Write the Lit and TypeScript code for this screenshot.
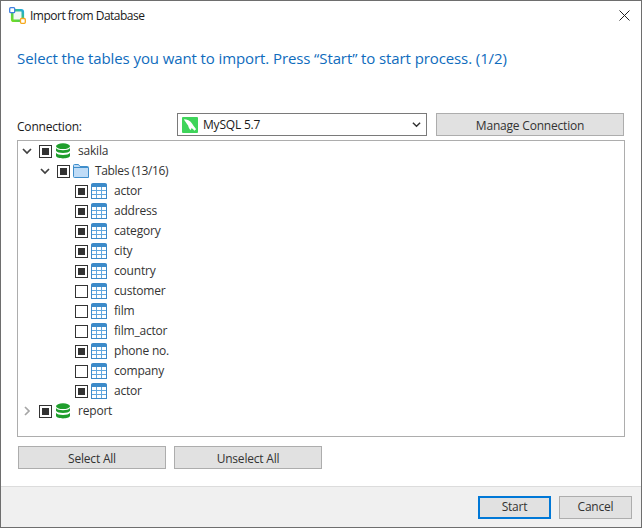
import { LitElement, html, css, svg } from "lit";
import { customElement } from "lit/decorators.js";

const chevDown = html`<svg class="chev" viewBox="0 0 10 10"><path d="M1 3 L5 7 L9 3" fill="none" stroke="#404040" stroke-width="1.7"/></svg>`;
const chevRight = html`<svg class="chev" viewBox="0 0 10 10"><path d="M3 1 L7 5 L3 9" fill="none" stroke="#a6a6a6" stroke-width="1.7"/></svg>`;
const dbIcon = html`<svg class="ico" viewBox="0 0 16 16">
  <ellipse cx="8" cy="3.2" rx="7" ry="2.9" fill="#1f9e2c"/>
  <path d="M1 5 C2.5 8 13.5 8 15 5 V7.8 C13.5 10.8 2.5 10.8 1 7.8Z" fill="#1f9e2c"/>
  <path d="M1 9.8 C2.5 12.8 13.5 12.8 15 9.8 V13 C14 16.2 2 16.2 1 13Z" fill="#1f9e2c"/>
</svg>`;
const folderIcon = html`<svg class="ico" viewBox="0 0 16 16">
  <path d="M0.5 13.5 V2.5 Q0.5 1.5 1.5 1.5 H5.5 L7 3.5 H14.5 Q15.5 3.5 15.5 4.5 V14.5 H1.5 Q0.5 14.5 0.5 13.5Z" fill="#bfdcf7" stroke="#3f8ecb"/>
  <path d="M1 4.5 H15" stroke="#3f8ecb"/>
</svg>`;
const tableIcon = html`<svg class="ico" viewBox="0 0 16 16">
  <path d="M0 2 Q0 0 2 0 H14 Q16 0 16 2 V4 H0Z" fill="#3d8bc9"/>
  <rect x="0.5" y="2" width="15" height="13.5" fill="none" stroke="#3d8bc9"/>
  <path d="M5.5 4 V15 M10.5 4 V15 M1 7.5 H15 M1 11.5 H15" stroke="#62a8de" stroke-width="1"/>
</svg>`;

const appLogo = svg`
  <defs>
    <linearGradient id="g" x1="0" y1="1" x2="1" y2="0">
      <stop offset="0" stop-color="#74dc24"/>
      <stop offset="0.55" stop-color="#3cc86a"/>
      <stop offset="1" stop-color="#22a8dc"/>
    </linearGradient>
  </defs>
  <rect x="3.2" y="3.2" width="10.6" height="10.6" rx="1.6" fill="#f4f8f4" stroke="url(#g)" stroke-width="2.6"/>
  <rect x="0.7" y="0.7" width="5" height="5" rx="1" fill="#fff" stroke="#3f7fe0" stroke-width="1.3"/>
  <rect x="11.5" y="11.5" width="4.8" height="4.8" rx="1" fill="#fff" stroke="#f5a81c" stroke-width="1.3"/>
`;

type Row = { label: string; checked: boolean };
const tables: Row[] = [
  { label: "actor", checked: true },
  { label: "address", checked: true },
  { label: "category", checked: true },
  { label: "city", checked: true },
  { label: "country", checked: true },
  { label: "customer", checked: false },
  { label: "film", checked: false },
  { label: "film_actor", checked: false },
  { label: "phone no.", checked: true },
  { label: "company", checked: false },
  { label: "actor", checked: true },
];

@customElement("app-root")
export class AppRoot extends LitElement {
  static styles = css`
    :host {
      display: block;
      width: 642px;
      height: 528px;
      font-family: "Open Sans", "Noto Sans", sans-serif;
      font-size: 12px;
      color: #333;
    }
    * { box-sizing: border-box; }
    .win {
      width: 642px;
      height: 528px;
      background: #fff;
      border: 1px solid #6e6e6e;
      display: flex;
      flex-direction: column;
    }
    .title {
      height: 29px;
      flex: none;
      display: flex;
      align-items: center;
      padding: 0 11px 0 8px;
      color: #1a1a1a;
      letter-spacing: -0.5px;
    }
    .logo { width: 17px; height: 17px; flex: none; }
    .title span { flex: 1; margin-left: 4px; }
    .close { width: 11px; height: 11px; }
    .main {
      flex: 1;
      display: flex;
      flex-direction: column;
      padding: 0 16px;
    }
    h1 {
      margin: 17px 0 0;
      height: 22px;
      line-height: 22px;
      font-size: 15px;
      font-weight: 400;
      color: #0f6cbd;
      letter-spacing: -0.1px;
    }
    .conn {
      margin-top: 44px;
      height: 23px;
      display: flex;
      align-items: stretch;
    }
    .conn label {
      width: 160px;
      flex: none;
      line-height: 27px;
      color: #1a1a1a;
      letter-spacing: -0.2px;
    }
    .combo {
      width: 250px;
      flex: none;
      border: 1px solid #7a7a7a;
      display: flex;
      align-items: center;
      padding: 0 5px 0 4px;
      color: #1a1a1a;
      letter-spacing: -0.2px;
    }
    .combo span { flex: 1; margin-left: 5px; }
    .sql { width: 16px; height: 16px; flex: none; }
    .drop { width: 9px; height: 9px; flex: none; }
    .btn {
      background: #e1e1e1;
      border: 1px solid #adadad;
      display: flex;
      align-items: center;
      justify-content: center;
      color: #333;
      letter-spacing: -0.2px;
      flex: none;
    }
    .manage { width: 188px; margin-left: 9px; padding-top: 1px; }
    .tree {
      margin-top: 4px;
      width: 608px;
      height: 297px;
      border: 1px solid #adadad;
    }
    .row {
      height: 20px;
      display: flex;
      align-items: center;
      letter-spacing: -0.2px;
    }
    .row .t { margin-bottom: 2px; }
    .l0 { padding-left: 4px; }
    .l1 { padding-left: 22px; }
    .l2 { padding-left: 57px; }
    .chev { width: 10px; height: 10px; flex: none; margin-right: 7px; }
    .cb {
      width: 13px;
      height: 13px;
      border: 1px solid #333;
      background: #fff;
      flex: none;
      display: flex;
      align-items: center;
      justify-content: center;
      margin-right: 3px;
    }
    .cb.on::after {
      content: "";
      width: 7px;
      height: 7px;
      background: #333;
    }
    .ico { width: 16px; height: 16px; flex: none; margin-right: 7px; }
    .l1 .ico { margin-right: 6px; }
    .row .tight { letter-spacing: -0.35px; }
    .actions {
      margin-top: 9px;
      display: flex;
      gap: 8px;
      padding-left: 1px;
    }
    .actions .btn { width: 148px; height: 23px; padding-top: 2px; }
    .foot {
      height: 41px;
      flex: none;
      background: #f0f0f0;
      border-top: 1px solid #dcdcdc;
      display: flex;
      justify-content: flex-end;
      align-items: center;
      gap: 8px;
      padding: 0 9px 0 0;
    }
    .foot .btn { width: 73px; height: 23px; padding-bottom: 2px; }
    .foot .primary { border: 2px solid #0078d7; }
  `;

  private cb(on: boolean) {
    return html`<span class="cb ${on ? "on" : ""}"></span>`;
  }

  render() {
    return html`<div class="win">
      <div class="title">
        <svg class="logo" viewBox="0 0 17 17">${appLogo}</svg>
        <span>Import from Database</span>
        <svg class="close" viewBox="0 0 11 11"><path d="M0.5 0.5 L10.5 10.5 M10.5 0.5 L0.5 10.5" stroke="#222" stroke-width="1" fill="none"/></svg>
      </div>
      <div class="main">
        <h1>Select the tables you want to import. Press “Start” to start process. (1/2)</h1>
        <div class="conn">
          <label>Connection:</label>
          <div class="combo">
            <svg class="sql" viewBox="0 0 17 17">
              <rect width="17" height="17" rx="1" fill="#3ed45a"/>
              <path d="M2 2.5 C5 2.5 9 4 11 7.5 C12 9.5 13.5 11 15 13 L13 14.5 C12 13 11 12.5 10 12 L9 14 C8 13 7 11 6.5 9 C5 7 3 4.5 2 2.5Z" fill="#fff"/>
            </svg>
            <span>MySQL 5.7</span>
            <svg class="drop" viewBox="0 0 10 10"><path d="M1 3 L5 7 L9 3" fill="none" stroke="#333" stroke-width="1.6"/></svg>
          </div>
          <div class="btn manage">Manage Connection</div>
        </div>
        <div class="tree">
          <div class="row l0">${chevDown}${this.cb(true)}${dbIcon}<span class="t">sakila</span></div>
          <div class="row l1">${chevDown}${this.cb(true)}${folderIcon}<span class="t tight">Tables (13/16)</span></div>
          ${tables.map(
            (t) => html`<div class="row l2">${this.cb(t.checked)}${tableIcon}<span class="t">${t.label}</span></div>`
          )}
          <div class="row l0">${chevRight}${this.cb(true)}${dbIcon}<span class="t">report</span></div>
        </div>
        <div class="actions">
          <div class="btn">Select All</div>
          <div class="btn">Unselect All</div>
        </div>
      </div>
      <div class="foot">
        <div class="btn primary">Start</div>
        <div class="btn">Cancel</div>
      </div>
    </div>`;
  }
}
